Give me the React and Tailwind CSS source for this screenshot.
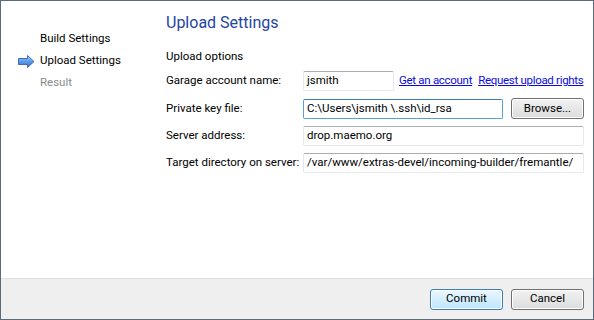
import React from 'react'

const font = { fontFamily: 'Roboto, "Noto Sans", sans-serif' }

function Arrow() {
  return (
    <svg width="17" height="13" viewBox="0 0 17 13">
      <defs>
        <linearGradient id="ag" x1="0" y1="0" x2="0" y2="1">
          <stop offset="0" stopColor="#a9cdf7" />
          <stop offset="0.5" stopColor="#5c9be8" />
          <stop offset="1" stopColor="#2f6fd0" />
        </linearGradient>
      </defs>
      <path d="M0.5 3.5 H9.5 V0.5 L16 6.5 L9.5 12.5 V9.5 H0.5 Z" fill="url(#ag)" stroke="#3c6db5" strokeWidth="1" strokeLinejoin="round" />
    </svg>
  )
}

function Field({ value, focus, className = '' }) {
  return (
    <div
      className={
        'h-[20px] flex items-center px-[3px] bg-white border rounded-[2px] text-[11.5px] text-black whitespace-nowrap overflow-hidden ' +
        (focus ? 'border-[#569de5] border-t-[#3d7bad] ' : 'border-[#e3e9ef] border-t-[#abadb3] ') +
        className
      }
    >
      {value}
    </div>
  )
}

function Btn({ children, primary }) {
  return (
    <div
      className={
        'w-[73px] h-[21px] flex items-center justify-center rounded-[3px] border text-[11.5px] text-black ' +
        (primary
          ? 'border-[#3c7fb1] bg-gradient-to-b from-[#eaf6fd] to-[#bee6fd] shadow-[inset_0_0_0_1px_#ffffff]'
          : 'border-[#707070] bg-gradient-to-b from-[#f2f2f2] to-[#dcdcdc] shadow-[inset_0_0_0_1px_#ffffff]')
      }
    >
      {children}
    </div>
  )
}

export default function App() {
  return (
    <div className="w-[594px] h-[320px] flex flex-col border border-[#5b6b7c] bg-white" style={font}>
      <div className="flex-1 flex">
        <div className="w-[165px] shrink-0 pt-[27px] text-[11.5px] whitespace-nowrap">
          <div className="h-[22px] flex items-center pl-[39px] text-black">Build Settings</div>
          <div className="h-[22px] flex items-center pl-[17px] gap-[5px] text-black">
            <Arrow />
            <span>Upload Settings</span>
          </div>
          <div className="h-[22px] flex items-center pl-[39px] text-[#8a8a8a]">Result</div>
        </div>
        <div className="flex-1 min-w-0 pr-[9px] text-[11.5px] text-black whitespace-nowrap">
          <div className="mt-[12px] text-[16px] leading-[20px] text-[#1e44a4]">Upload Settings</div>
          <div className="mt-[15px] leading-[16px]">Upload options</div>
          <div className="mt-[7px] grid grid-cols-[137px_minmax(0,1fr)] gap-y-[7px] items-center">
            <div>Garage account name:</div>
            <div className="flex items-center">
              <Field value="jsmith" className="w-[91px] shrink-0" />
              <a className="ml-[5px] text-[#0a0ade] underline tracking-[-0.3px]">Get an account</a>
              <a className="ml-[6px] text-[#0a0ade] underline tracking-[-0.3px]">Request upload rights</a>
            </div>
            <div>Private key file:</div>
            <div className="flex items-center">
              <Field value="C:\Users\jsmith \.ssh\id_rsa" focus className="w-[200px] shrink-0" />
              <div className="ml-auto">
                <Btn>Browse...</Btn>
              </div>
            </div>
            <div>Server address:</div>
            <Field value="drop.maemo.org" />
            <div>Target directory on server:</div>
            <Field value="/var/www/extras-devel/incoming-builder/fremantle/" />
          </div>
        </div>
      </div>
      <div className="h-[41px] border-t border-[#dfdfdf] bg-[#efefef] flex items-center justify-end gap-[8px] pr-[9px]">
        <Btn primary>Commit</Btn>
        <Btn>Cancel</Btn>
      </div>
    </div>
  )
}
